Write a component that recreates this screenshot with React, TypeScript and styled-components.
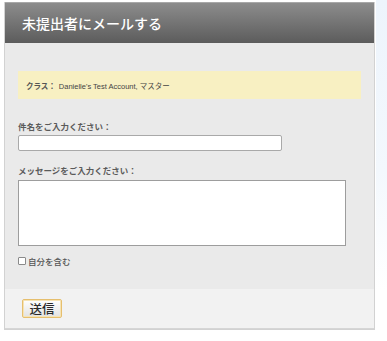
import React from 'react';
import styled, { createGlobalStyle } from 'styled-components';

const Global = createGlobalStyle`
  html, body {
    margin: 0;
    padding: 0;
    background: #fff;
  }
  body {
    font-family: "Liberation Sans", "Noto Sans CJK JP", sans-serif;
  }
`;

const Page = styled.div`
  display: flex;
  align-items: flex-start;
  height: 341px;
  padding: 2px 0 0 4px;
  box-sizing: border-box;
`;

const Side = styled.div`
  flex: 1;
  align-self: stretch;
  margin-left: 1px;
  margin-top: -2px;
  background: linear-gradient(to bottom, #edf4fc 0%, #f3f8fd 50%, #ffffff 85%);
`;

const Panel = styled.div`
  width: 371px;
  box-sizing: border-box;
  border: 1px solid #d2d2d2;
  border-top: none;
  background: #eaeaea;
`;

const Header = styled.div`
  height: 41px;
  display: flex;
  align-items: center;
  padding-left: 17px;
  background: linear-gradient(to bottom, #8c8c8c 0%, #5c5c5c 100%);
  border-top: 1px solid #a8a8a8;
  box-sizing: border-box;
`;

const Title = styled.h1`
  margin: 0;
  font-family: "Noto Sans CJK JP", sans-serif;
  font-size: 14px;
  font-weight: 500;
  color: #fff;
`;

const Body = styled.div`
  padding: 28px 13px 22px 13px;
  display: flex;
  flex-direction: column;
`;

const Notice = styled.div`
  height: 28px;
  display: flex;
  align-items: center;
  gap: 3px;
  padding-left: 8px;
  background: #f8f0c2;
  font-size: 7.5px;
  color: #444;
`;

const NoticeLabel = styled.span`
  font-weight: bold;
  font-size: 7.5px;
  color: #555;
`;

const Label = styled.label<{ $top: number }>`
  display: block;
  margin-top: ${(p) => p.$top}px;
  height: 12px;
  line-height: 12px;
  font-size: 8.5px;
  font-weight: bold;
  color: #5a5a5a;
`;

const TextInput = styled.input`
  display: block;
  margin-top: 2px;
  width: 264px;
  height: 16px;
  box-sizing: border-box;
  border: 1px solid #a9a9a9;
  border-radius: 2px;
  background: #fff;
  padding: 0 3px;
  outline: none;
`;

const TextArea = styled.textarea`
  display: block;
  margin-top: 3px;
  width: 328px;
  height: 66px;
  box-sizing: border-box;
  border: 1px solid #9d9d9d;
  background: #fff;
  resize: none;
  outline: none;
`;

const CheckRow = styled.label`
  display: flex;
  align-items: center;
  gap: 2px;
  margin-top: 9px;
  height: 12px;
  font-size: 8.5px;
  font-weight: 500;
  color: #555;
`;

const Box = styled.span`
  width: 6px;
  height: 6px;
  border: 1px solid #8a8a8a;
  border-radius: 1px;
  background: #fff;
`;

const Footer = styled.div`
  height: 40px;
  padding: 10px 0 0 17px;
  box-sizing: border-box;
  background: #f2f2f2;
  border-bottom: 1px solid #d6d6d6;
`;

const Button = styled.button`
  width: 40px;
  height: 19px;
  padding: 0;
  border: 1px solid #e6bf6e;
  border-radius: 2px;
  background: linear-gradient(to bottom, #ffffff 0%, #e2e2e2 100%);
  box-shadow: inset 0 0 0 1px #f6e3b4;
  font-family: "Noto Sans CJK JP", sans-serif;
  font-size: 12.5px;
  font-weight: 500;
  color: #2a2a2a;
  line-height: 17px;
`;

export default function App() {
  return (
    <Page>
      <Global />
      <Panel>
        <Header>
          <Title>未提出者にメールする</Title>
        </Header>
        <Body>
          <Notice>
            <NoticeLabel>クラス：</NoticeLabel>
            <span>Danielle's Test Account, マスター</span>
          </Notice>
          <Label $top={22}>件名をご入力ください：</Label>
          <TextInput type="text" />
          <Label $top={14}>メッセージをご入力ください：</Label>
          <TextArea />
          <CheckRow>
            <Box />
            自分を含む
          </CheckRow>
        </Body>
        <Footer>
          <Button>送信</Button>
        </Footer>
      </Panel>
      <Side />
    </Page>
  );
}
